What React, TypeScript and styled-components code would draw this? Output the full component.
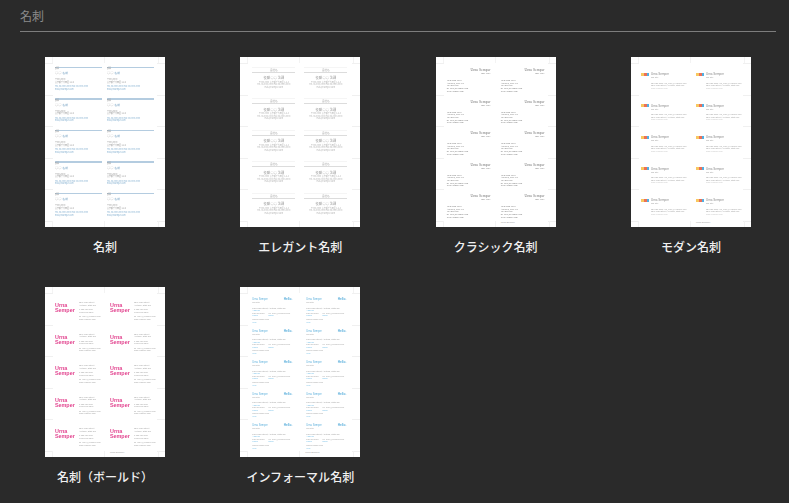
import { ReactElement, ReactNode } from 'react';
import styled, { createGlobalStyle } from 'styled-components';

//
// Styles
//

const GlobalStyle = createGlobalStyle`
  html, body {
    margin: 0;
    height: 100%;
    background: #2a2a2a;
    font-family: "Noto Sans CJK JP", "Noto Sans", sans-serif;
  }
`;

const Page = styled.main`
  width: 789px;
  height: 503px;
  overflow: hidden;
  background: #2a2a2a;
`;

const SectionHeader = styled.h2`
  margin: 0 13px 0 20px;
  height: 32px;
  box-sizing: border-box;
  padding-top: 7px;
  border-bottom: 1px solid #7d7d7d;
  color: #8b8b8b;
  font-size: 12px;
  font-weight: 400;
  line-height: 18px;
`;

const TemplateGrid = styled.div`
  display: grid;
  grid-template-columns: repeat(4, 195.33px);
  grid-auto-rows: 230px;
  padding: 25px 0 0 7.33px;
`;

const TemplateItem = styled.figure`
  display: flex;
  flex-direction: column;
  align-items: center;
  margin: 0;
`;

const TemplateLabel = styled.figcaption`
  margin-top: 11px;
  color: #f0f0f0;
  font-size: 12px;
  font-weight: 500;
  line-height: 18px;
  white-space: nowrap;
`;

const SheetFrame = styled.div`
  position: relative;
  width: 120px;
  height: 170px;
  overflow: hidden;
  background: #fff;
`;

const SheetCards = styled.div<{ $inset: number; $pitch: number }>`
  display: grid;
  grid-template-columns: repeat(2, ${({ $pitch }) => $pitch}px);
  grid-auto-rows: 31.5px;
  padding: 6px 0 0 ${({ $inset }) => $inset}px;
  filter: blur(0.3px);
`;

const MarkH = styled.i<{ $side: 'left' | 'right'; $top: number }>`
  position: absolute;
  ${({ $side }) => $side}: 0;
  top: ${({ $top }) => $top}px;
  width: 8px;
  height: 1px;
  background: #f0f0f0;
`;

const MarkV = styled.i<{ $left: number; $bottom?: boolean }>`
  position: absolute;
  left: ${({ $left }) => $left}px;
  ${({ $bottom }) => ($bottom ? 'bottom: 0' : 'top: 0')};
  width: 1px;
  height: 6px;
  background: #f3f3f3;
`;

const SheetNote = styled.span`
  position: absolute;
  left: 65px;
  bottom: 3px;
  color: #999;
  font-family: "Liberation Sans", sans-serif;
  font-size: 2.4px;
  line-height: 3px;
`;

const Line = styled.div<{ $color?: string; $gap?: number }>`
  margin-top: ${({ $gap }) => $gap ?? 0}px;
  color: ${({ $color }) => $color ?? '#a0a0a0'};
  font-size: 2px;
  line-height: 2.6px;
  white-space: nowrap;
`;

// basic

const BasicCard = styled.div`
  padding-top: 3.5px;
  width: 47px;
`;

const BasicBar = styled.div`
  height: 1.5px;
  background: #b4cce0;
`;

const BasicName = styled.div`
  margin-top: 0.2px;
  color: #7aa4c4;
  font-size: 2.8px;
  line-height: 3px;
`;

const BasicCircles = styled.span`
  color: #b5b5b5;
  font-size: 3.2px;
  margin-right: 1px;
`;

// elegant

const ElegantCard = styled.div`
  padding-top: 3.5px;
  width: 43px;
  text-align: center;
  ${Line} {
    color: #b4b4b4;
  }
`;

const ElegantCompany = styled.div`
  border-top: 1px solid #f5f5f5;
  border-bottom: 1px solid #dcdcdc;
  color: #a8a8a8;
  font-size: 2.6px;
  line-height: 4px;
`;

const ElegantName = styled.div`
  margin: 3.5px 0 1.5px;
  color: #a0a0a0;
  font-size: 3.2px;
  line-height: 4px;
`;

// classic

const ClassicCard = styled.div`
  padding-top: 5px;
  width: 44px;
  color: #707070;
  font-family: "Liberation Serif", serif;
`;

const ClassicHead = styled.div`
  width: 44px;
  text-align: right;
`;

const ClassicName = styled.div`
  font-size: 3.6px;
  line-height: 4px;
  letter-spacing: 0.1px;
`;

const ClassicTitle = styled.div`
  font-size: 2.8px;
  line-height: 4px;
`;

const ClassicLine = styled.div`
  font-size: 2.2px;
  line-height: 2.7px;
  white-space: nowrap;
`;

const ClassicBody = styled.div`
  margin-top: 3px;
`;

// modern

const ModernCard = styled.div`
  padding-top: 9px;
  font-family: "Liberation Sans", sans-serif;
`;

const ModernHead = styled.div`
  display: flex;
  align-items: center;
  gap: 2px;
  color: #8a8a8a;
  font-size: 3px;
  line-height: 4px;
`;

const Swatch = styled.span`
  width: 8px;
  height: 3px;
  background: linear-gradient(
    90deg,
    #f8c860 0 35%,
    #ec7058 35% 70%,
    #50b0e4 70% 100%
  );
`;

const ModernBody = styled.div`
  padding-left: 10px;
`;

// bold

const BoldCard = styled.div`
  display: flex;
  padding-top: 8px;
  font-family: "Liberation Sans", sans-serif;
`;

const BoldName = styled.div`
  width: 24px;
  padding-top: 2px;
  color: #e2448f;
  font-size: 5.4px;
  font-weight: 700;
  line-height: 5px;
`;

const BoldInfo = styled.div`
  color: #777;
`;

// informal

const InformalCard = styled.div`
  padding-top: 5px;
  width: 40px;
  font-family: "Liberation Sans", sans-serif;
`;

const InformalHead = styled.div`
  display: flex;
  justify-content: space-between;
  align-items: flex-end;
  color: #5eb0dc;
  font-size: 2.6px;
  line-height: 3px;
`;

const Hello = styled.span`
  font-size: 3.2px;
  font-weight: 700;
`;

const InfoColumns = styled.div`
  display: flex;
  gap: 4px;
`;

//
// Data
//

const BLUE = '#85b0d0';
const SKY = '#70bce6';

const Basic = (): ReactElement => (
  <BasicCard>
    <BasicBar />
    <Line $gap={0.3}>部署</Line>
    <BasicName>
      <BasicCircles>○○</BasicCircles>
      名前
    </BasicName>
    <Line $gap={4}>〒000-0000</Line>
    <Line>東京都千代田区 1-2-3</Line>
    <Line $color={BLUE} $gap={2}>TEL 03-0000-0000 FAX 03-0000-0000</Line>
    <Line $color={BLUE}>mail@example.com</Line>
  </BasicCard>
);

const Elegant = (): ReactElement => (
  <ElegantCard>
    <ElegantCompany>会社名</ElegantCompany>
    <ElegantName>役職 ○○ 法課</ElegantName>
    <Line>〒000-0000 東京都千代田区 1-2-3</Line>
    <Line>TEL 03-0000-0000 FAX 03-0000-0000</Line>
    <Line>mail@example.com</Line>
  </ElegantCard>
);

const Classic = (): ReactElement => (
  <ClassicCard>
    <ClassicHead>
      <ClassicName>Urna Semper</ClassicName>
      <ClassicTitle>Job Title</ClassicTitle>
    </ClassicHead>
    <ClassicBody>
      <ClassicLine>1234 Main Street</ClassicLine>
      <ClassicLine>Anytown, State ZIP</ClassicLine>
      <ClassicLine>123.456.7890</ClassicLine>
      <ClassicLine>no_reply@example.com</ClassicLine>
      <ClassicLine>www.example.com</ClassicLine>
    </ClassicBody>
  </ClassicCard>
);

const Modern = (): ReactElement => (
  <ModernCard>
    <ModernHead>
      <Swatch />
      Urna Semper
    </ModernHead>
    <ModernBody>
      <Line>Job Title</Line>
      <Line $gap={3}>123.456.7890 | no_reply@example.com</Line>
      <Line>1234 Main Street, Anytown, State ZIP</Line>
      <Line $color="#c5c5c5">www.example.com</Line>
    </ModernBody>
  </ModernCard>
);

const Bold = (): ReactElement => (
  <BoldCard>
    <BoldName>
      Urna
      <br />
      Semper
    </BoldName>
    <BoldInfo>
      <Line>1234 Main Street</Line>
      <Line>Anytown, State ZIP</Line>
      <Line $gap={2}>T 123.456.7890</Line>
      <Line>M 123.456.7890</Line>
      <Line $gap={2}>no_reply@example.com</Line>
      <Line>www.example.com</Line>
    </BoldInfo>
  </BoldCard>
);

const Informal = (): ReactElement => (
  <InformalCard>
    <InformalHead>
      Urna Semper
      <Hello>Hello.</Hello>
    </InformalHead>
    <Line>Job Title</Line>
    <Line $gap={3}>1234 Main Street, Anytown, State ZIP</Line>
    <Line $color={SKY}>Address</Line>
    <InfoColumns>
      <div>
        <Line>123.456.7890</Line>
        <Line $color={SKY}>Phone</Line>
      </div>
      <div>
        <Line>no_reply@example.com</Line>
        <Line $color={SKY}>Email</Line>
      </div>
    </InfoColumns>
    <Line $gap={1}>www.example.com</Line>
    <Line $color={SKY}>Web</Line>
  </InformalCard>
);

interface Template {
  label: string;
  Card: () => ReactElement;
  inset: number;
  pitch: number;
  note?: string;
}

const TEMPLATES: Template[] = [
  { label: '名刺', Card: Basic, inset: 10, pitch: 52 },
  { label: 'エレガント名刺', Card: Elegant, inset: 12, pitch: 52 },
  { label: 'クラシック名刺', Card: Classic, inset: 11, pitch: 54, note: 'Urna Semper' },
  { label: 'モダン名刺', Card: Modern, inset: 10, pitch: 55, note: 'Urna Semper' },
  { label: '名刺（ボールド）', Card: Bold, inset: 10, pitch: 55, note: 'Urna Semper' },
  { label: 'インフォーマル名刺', Card: Informal, inset: 12, pitch: 54, note: 'Urna Semper' },
];

const MARK_ROWS = [6, 37.5, 69, 100.5, 132, 163.5];
const MARK_COLS = [7, 59, 113];

const Sheet = ({
  children,
  inset,
  pitch,
  note,
}: {
  children: ReactNode;
  inset: number;
  pitch: number;
  note?: string;
}): ReactElement => (
  <SheetFrame>
    {MARK_ROWS.map((top) => (
      <MarkH key={`l${top}`} $side="left" $top={top} />
    ))}
    {MARK_ROWS.map((top) => (
      <MarkH key={`r${top}`} $side="right" $top={top} />
    ))}
    {MARK_COLS.map((left) => (
      <MarkV key={`t${left}`} $left={left} />
    ))}
    {MARK_COLS.map((left) => (
      <MarkV key={`b${left}`} $left={left} $bottom />
    ))}
    <SheetCards $inset={inset} $pitch={pitch}>{children}</SheetCards>
    {note && <SheetNote>{note}</SheetNote>}
  </SheetFrame>
);

//
// Component
//

const App = (): ReactElement => (
  <Page>
    <GlobalStyle />
    <SectionHeader>名刺</SectionHeader>
    <TemplateGrid>
      {TEMPLATES.map(({ label, Card, inset, pitch, note }) => (
        <TemplateItem key={label}>
          <Sheet inset={inset} pitch={pitch} note={note}>
            {Array.from({ length: 10 }, (_, i) => <Card key={i} />)}
          </Sheet>
          <TemplateLabel>{label}</TemplateLabel>
        </TemplateItem>
      ))}
    </TemplateGrid>
  </Page>
);

export default App;
